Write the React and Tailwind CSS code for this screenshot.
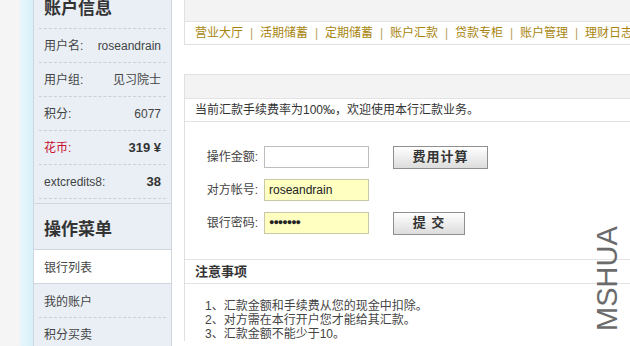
const font = "font-['Liberation_Sans','Noto_Sans_CJK_SC',sans-serif]";

const accountRows = [
  { label: "用户名:", value: "roseandrain" },
  { label: "用户组:", value: "见习院士" },
  { label: "积分:", value: "6077" },
  { label: "花币:", value: "319 ¥", red: true, bold: true },
  { label: "extcredits8:", value: "38", bold: true },
];

const navItems = ["营业大厅", "活期储蓄", "定期储蓄", "账户汇款", "贷款专柜", "账户管理", "理财日志"];

function Sidebar() {
  return (
    <div className="w-[139px] shrink-0 border-l border-r border-[#cfd6dd] bg-[#e9eff5] text-[12px] text-[#444]">
      <div className="-mt-[10px] h-[38px] flex items-center pl-[10px] text-[17px] font-bold text-[#333]">
        账户信息
      </div>
      <div className="mx-[5px] border-t border-dashed border-[#c9d0d6]">
        {accountRows.map((r) => (
          <div
            key={r.label}
            className="h-[34px] flex items-center justify-between px-[5px] border-b border-dashed border-[#c9d0d6]"
          >
            <span className={r.red ? "text-[#c8102e]" : ""}>{r.label}</span>
            <span className={r.bold ? "font-bold text-[13px] text-[#333]" : ""}>{r.value}</span>
          </div>
        ))}
      </div>
      <div className="h-[5px] border-b border-[#cfd6dd]" />
      <div className="h-[46px] flex items-center pl-[10px] pt-[6px] text-[17px] font-bold text-[#333] border-b border-[#cfd6dd]">
        操作菜单
      </div>
      <div className="h-[34px] flex items-center pl-[10px] pt-[2px] bg-white border-b border-[#cfd6dd]">银行列表</div>
      <div className="mx-[5px] h-[34px] flex items-center pl-[5px] pt-[2px] border-b border-dashed border-[#c9d0d6]">
        我的账户
      </div>
      <div className="h-[33px] flex items-center pl-[10px]">积分买卖</div>
    </div>
  );
}

function Btn({ children, w }) {
  return (
    <button
      className={`${w} h-[23px] border border-[#8f8f8f] bg-gradient-to-b from-[#ffffff] to-[#dcdcdc] text-[13px] font-bold text-[#333] tracking-[1px]`}
    >
      {children}
    </button>
  );
}

function FormRow({ label, children }) {
  return (
    <div className="flex items-center h-[22px]">
      <div className="w-[79px] pr-[6px] text-right text-[12px] text-[#444]">{label}</div>
      {children}
    </div>
  );
}

function Main() {
  return (
    <div className="flex-1 min-w-0 text-[12px] text-[#333]">
      <div className="border-l border-b border-[#e0e0e0]">
        <div className="h-[22px] bg-[#f3f3f3] border-b border-[#e3e3e3]" />
        <div className="h-[22px] flex items-center pl-[10px] whitespace-nowrap text-[12px] text-[#a8860e]">
          {navItems.map((n, i) => (
            <span key={n} className="flex items-center">
              {i > 0 && <span className="w-[17px] text-center text-[#b8a060]">|</span>}
              {n}
            </span>
          ))}
        </div>
      </div>

      <div className="mt-[29px] border-l border-t border-[#e0e0e0]">
        <div className="h-[24px] bg-[#f3f3f3] border-b border-[#e3e3e3]" />
        <div className="h-[23px] flex items-center pl-[10px] border-b border-[#e3e3e3]">
          当前汇款手续费率为100‰，欢迎使用本行汇款业务。
        </div>

        <div className="pt-[24px] pb-[25px] flex flex-col gap-[11px] border-b border-[#e3e3e3]">
          <FormRow label="操作金额:">
            <input className="w-[105px] h-[22px] border border-[#bdbdbd] bg-white outline-none" />
            <div className="ml-[24px]">
              <Btn w="w-[95px]">费用计算</Btn>
            </div>
          </FormRow>
          <FormRow label="对方帐号:">
            <div className="w-[105px] h-[22px] border border-[#c8c8a8] bg-[#ffffc2] flex items-center pl-[4px] text-[12px] text-[#222]">
              roseandrain
            </div>
          </FormRow>
          <FormRow label="银行密码:">
            <div className="w-[105px] h-[22px] border border-[#c8c8a8] bg-[#ffffc2] flex items-center pl-[4px] text-[9px] font-bold tracking-[-1px] text-[#222]">
              ●●●●●●●
            </div>
            <div className="ml-[24px]">
              <Btn w="w-[72px]">提 交</Btn>
            </div>
          </FormRow>
        </div>

        <div className="h-[24px] flex items-center pl-[10px] font-bold text-[13px] border-b border-[#e3e3e3]">
          注意事项
        </div>
        <div className="pt-[15px] pl-[20px] leading-[14px] text-[#444]">
          <div>1、汇款金额和手续费从您的现金中扣除。</div>
          <div>2、对方需在本行开户您才能给其汇款。</div>
          <div>3、汇款金额不能少于10。</div>
        </div>
      </div>
    </div>
  );
}

export default function App() {
  return (
    <div className={`relative w-[630px] h-[346px] overflow-hidden bg-white flex ${font}`}>
      <div className="w-[20px] shrink-0 bg-[#f5f5f5]" />
      <div className="w-[13px] shrink-0 bg-gradient-to-r from-[#e9f6fb] to-[#d8f0fa]" />
      <Sidebar />
      <div className="w-[12px] shrink-0" />
      <Main />
      <div className="absolute left-[594px] top-[229px] h-[102px] flex items-center [writing-mode:vertical-rl] rotate-180 text-[29px] leading-[26px] text-[#6b6b6b] font-['Liberation_Sans',sans-serif]">
        MSHUA
      </div>
    </div>
  );
}
